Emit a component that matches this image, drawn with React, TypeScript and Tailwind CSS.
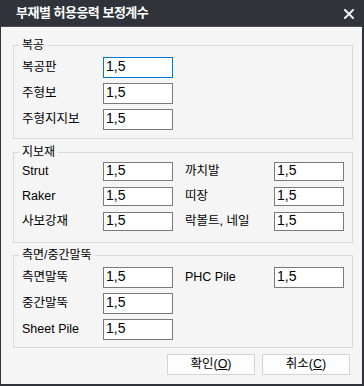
const font = "font-['Liberation_Sans','Noto_Sans_CJK_KR',sans-serif]";

/** Label + value box, one cell of a group row */
function Field({
  label,
  labelWidth,
  height,
  focused = false,
}: {
  label: string;
  labelWidth: string;
  height: string;
  focused?: boolean;
}) {
  return (
    <div className="flex items-center">
      <span className={`${labelWidth} shrink-0 text-[12.5px] leading-none text-black`}>{label}</span>
      <input
        readOnly
        value="1,5"
        className={`${height} w-[70px] shrink-0 border bg-white px-[2px] pb-[3px] text-[14px] leading-none text-black outline-none ${
          focused ? 'border-[#0078d7]' : 'border-[#7a7a7a]'
        }`}
      />
    </div>
  );
}

type Row = { left: string; right?: string };

/** Group box with legend and two columns of fields */
function Group({
  title,
  rows,
  height,
  className,
  focusFirst = false,
}: {
  title: string;
  rows: Row[];
  height: string;
  className: string;
  focusFirst?: boolean;
}) {
  return (
    <fieldset className={`border border-[#d9d9d9] pl-[8px] pr-[8px] ${className}`}>
      <legend className="-ml-[3px] px-[3px] text-[12px] leading-[16px] text-black">{title}</legend>
      <div className={`flex flex-col ${height === 'h-[19px]' ? 'gap-[6px]' : 'gap-[5px]'}`}>
        {rows.map((r, i) => (
          <div key={r.left} className="flex gap-[12px]">
            <Field label={r.left} labelWidth="w-[81px]" height={height} focused={focusFirst && i === 0} />
            {r.right && <Field label={r.right} labelWidth="w-[89px]" height={height} />}
          </div>
        ))}
      </div>
    </fieldset>
  );
}

export default function App() {
  return (
    <div className={`${font} flex h-[386px] w-[364px] flex-col bg-[#30343a] pb-[2px] pl-px pr-[2px]`}>
      {/* Title bar */}
      <div className="flex h-[26px] shrink-0 items-center justify-between pl-[15px] pr-[8px]">
        <span className="text-[13px] font-bold tracking-[-0.5px] text-white">부재별 허용응력 보정계수</span>
        <svg width="10" height="10" viewBox="0 0 10 10" className="mt-px">
          <path d="M1 1L9 9M9 1L1 9" stroke="#f2f2f2" strokeWidth="2" strokeLinecap="square" />
        </svg>
      </div>
      <div className="h-px shrink-0 bg-[#4b5057]" />

      {/* Body */}
      <div className="flex flex-1 flex-col bg-[#f5f5f5] pl-[12px] pr-[9px] pt-[10px]">
        <Group
          title="복공"
          height="h-[21px]"
          className="pb-[8px] pt-[4px]"
          focusFirst
          rows={[{ left: '복공판' }, { left: '주형보' }, { left: '주형지지보' }]}
        />
        <Group
          title="지보재"
          height="h-[19px]"
          className="mt-[5px] pb-[11px] pt-[2px]"
          rows={[
            { left: 'Strut', right: '까치발' },
            { left: 'Raker', right: '띠장' },
            { left: '사보강재', right: '락볼트, 네일' },
          ]}
        />
        <Group
          title="측면/중간말뚝"
          height="h-[21px]"
          className="mt-[4px] pb-[7px] pt-[4px]"
          rows={[
            { left: '측면말뚝', right: 'PHC Pile' },
            { left: '중간말뚝' },
            { left: 'Sheet Pile' },
          ]}
        />

        {/* Buttons */}
        <div className="mt-[6px] flex justify-end gap-[7px] pr-[3px]">
          <button className="h-[21px] w-[88px] border border-[#d4d4d4] bg-[#fdfdfd] text-[12.5px] leading-none text-black">
            확인(<span className="underline">O</span>)
          </button>
          <button className="h-[21px] w-[88px] border border-[#d4d4d4] bg-[#fdfdfd] text-[12.5px] leading-none text-black">
            취소(<span className="underline">C</span>)
          </button>
        </div>
      </div>
    </div>
  );
}
